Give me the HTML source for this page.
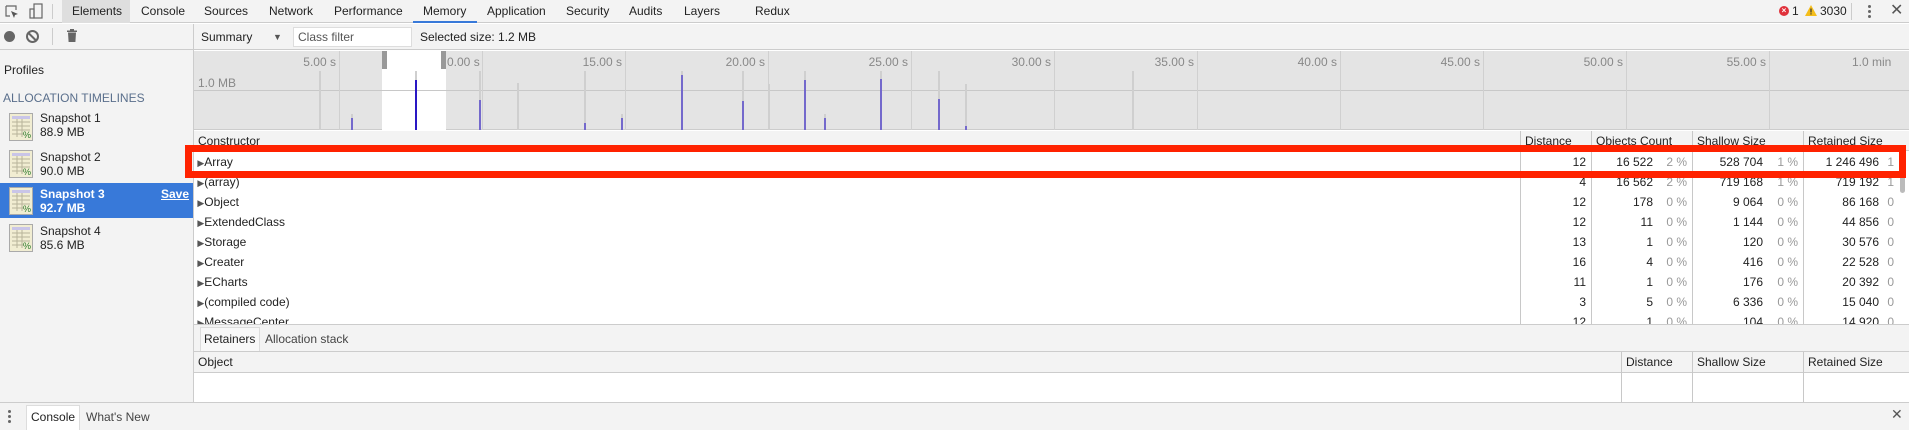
<!DOCTYPE html>
<html><head><meta charset="utf-8"><style>
*{box-sizing:border-box;margin:0;padding:0}
body{width:1909px;height:430px;overflow:hidden;background:#fff;font-family:"Liberation Sans",Arial,sans-serif;font-size:12px;color:#222;position:relative}
.a{position:absolute}
.t{position:absolute;white-space:nowrap;line-height:14px}
.gl{position:absolute;width:1px;background:#d0d0d0}
.bar{position:absolute;width:2px}
.g{background:#cfcfcf}
.b{background:#7469cc}
.r{text-align:right}
.pct{color:#999}
.vl{position:absolute;width:1px;background:#c8c8c8}
</style></head><body>
<div class="a" style="left:0;top:0;width:1909px;height:23px;background:#f3f3f3;border-bottom:1px solid #ccc"></div>
<svg class="a" style="left:4px;top:4px" width="16" height="16" viewBox="0 0 16 16"><path d="M2 2h10v4M2 2v10h4" fill="none" stroke="#666" stroke-width="1.2"/><path d="M7 7l7 3-3 1-1 3z" fill="#555"/></svg>
<svg class="a" style="left:29px;top:3px" width="14" height="17" viewBox="0 0 14 17"><rect x="5" y="1" width="8" height="14" fill="none" stroke="#666" stroke-width="1.2"/><rect x="1" y="6" width="4" height="9" fill="none" stroke="#666" stroke-width="1.2"/></svg>
<div class="a" style="left:52px;top:4px;width:1px;height:15px;background:#ccc"></div>
<div class="a" style="left:62px;top:0;width:68px;height:23px;background:#dedede"></div>
<div class="t" style="left:72px;top:4px">Elements</div>
<div class="t" style="left:141px;top:4px">Console</div>
<div class="t" style="left:204px;top:4px">Sources</div>
<div class="t" style="left:269px;top:4px">Network</div>
<div class="t" style="left:334px;top:4px">Performance</div>
<div class="t" style="left:423px;top:4px">Memory</div>
<div class="a" style="left:413px;top:21px;width:64px;height:2px;background:#3879d9"></div>
<div class="t" style="left:487px;top:4px">Application</div>
<div class="t" style="left:566px;top:4px">Security</div>
<div class="t" style="left:629px;top:4px">Audits</div>
<div class="t" style="left:684px;top:4px">Layers</div>
<div class="t" style="left:755px;top:4px">Redux</div>
<div class="a" style="left:1779px;top:6px;width:10px;height:10px;border-radius:50%;background:#e0313b;color:#fff;font-size:8px;line-height:10px;text-align:center;font-weight:bold">×</div>
<div class="t" style="left:1792px;top:4px">1</div>
<svg class="a" style="left:1805px;top:5px" width="12" height="11" viewBox="0 0 12 11"><path d="M6 0L12 11H0z" fill="#f4bd1a"/><rect x="5.4" y="3.5" width="1.2" height="4" fill="#333"/><rect x="5.4" y="8.3" width="1.2" height="1.2" fill="#333"/></svg>
<div class="t" style="left:1820px;top:4px">3030</div>
<div class="a" style="left:1851px;top:3px;width:1px;height:17px;background:#ccc"></div>
<div class="a" style="left:1868px;top:5px;width:3px;height:3px;border-radius:50%;background:#666;box-shadow:0 5px 0 #666,0 10px 0 #666"></div>
<div class="t" style="left:1890px;top:4px;font-size:16px;color:#555">✕</div>
<div class="a" style="left:0;top:24px;width:1909px;height:26px;background:#f3f3f3;border-bottom:1px solid #ccc"></div>
<div class="a" style="left:4px;top:31px;width:11px;height:11px;border-radius:50%;background:#666"></div>
<div class="a" style="left:26px;top:30px;width:13px;height:13px;border-radius:50%;border:2px solid #666"></div>
<div class="a" style="left:27px;top:35.5px;width:11px;height:2px;background:#666;transform:rotate(45deg)"></div>
<div class="a" style="left:52px;top:28px;width:1px;height:17px;background:#ccc"></div>
<svg class="a" style="left:67px;top:29px" width="10" height="13" viewBox="0 0 10 13"><rect x="0" y="1.5" width="10" height="1.5" fill="#666"/><rect x="3" y="0" width="4" height="2" fill="#666"/><path d="M1 3.5h8l-0.6 9.5h-6.8z" fill="#666"/></svg>
<div class="a" style="left:193px;top:24px;width:1px;height:379px;background:#ccc"></div>
<div class="t" style="left:201px;top:30px">Summary</div>
<div class="t" style="left:273px;top:30px;font-size:9px;color:#555">▼</div>
<div class="a" style="left:293px;top:27px;width:119px;height:20px;background:#fff;border:1px solid #ddd"></div>
<div class="t" style="left:298px;top:30px;color:#555">Class filter</div>
<div class="t" style="left:420px;top:30px">Selected size: 1.2 MB</div>
<div class="a" style="left:0;top:50px;width:193px;height:352px;background:#f3f3f3"></div>
<div class="t" style="left:4px;top:63px">Profiles</div>
<div class="t" style="left:3px;top:91px;color:#5a6f8c">ALLOCATION TIMELINES</div>
<div class="a" style="left:0;top:183px;width:193px;height:35px;background:#3879d9"></div>
<div class="t" style="left:40px;top:111px">Snapshot 1<br>88.9 MB</div>
<div class="t" style="left:40px;top:150px">Snapshot 2<br>90.0 MB</div>
<div class="t" style="left:40px;top:187px;color:#fff;font-weight:bold">Snapshot 3<br>92.7 MB</div>
<div class="t" style="left:161px;top:187px;color:#fff;font-weight:bold;text-decoration:underline">Save</div>
<div class="t" style="left:40px;top:224px">Snapshot 4<br>85.6 MB</div>
<svg class="a" style="left:9px;top:113px" width="24" height="140" viewBox="0 0 24 140">
<g id="si"><rect x="0.5" y="0.5" width="23" height="27" fill="#f1edd2" stroke="#aaa"/><rect x="3" y="3" width="18" height="3" fill="#c9c5e8"/><path d="M3 9h18M3 13h18M3 17h18M3 21h12M8 6v18M13 6v18" stroke="#b7b39a" stroke-width="1"/><text x="14" y="25" font-size="9" fill="#2a7a2a" font-family="Liberation Sans">%</text></g>
<use href="#si" y="37"/><use href="#si" y="74"/><use href="#si" y="111"/>
</svg>
<div class="a" style="left:194px;top:51px;width:1715px;height:79px;background:#e4e4e4;border-bottom:1px solid #ccc"></div>
<div class="a" style="left:382px;top:51px;width:64px;height:79px;background:#fff"></div>
<div class="a" style="left:194px;top:90px;width:1715px;height:1px;background:#c8c8c8"></div>
<div class="t" style="left:198px;top:76px;color:#888">1.0 MB</div>
<div class="gl" style="left:339px;top:51px;height:79px"></div>
<div class="gl" style="left:482px;top:51px;height:79px"></div>
<div class="gl" style="left:625px;top:51px;height:79px"></div>
<div class="gl" style="left:768px;top:51px;height:79px"></div>
<div class="gl" style="left:911px;top:51px;height:79px"></div>
<div class="gl" style="left:1054px;top:51px;height:79px"></div>
<div class="gl" style="left:1197px;top:51px;height:79px"></div>
<div class="gl" style="left:1340px;top:51px;height:79px"></div>
<div class="gl" style="left:1483px;top:51px;height:79px"></div>
<div class="gl" style="left:1626px;top:51px;height:79px"></div>
<div class="gl" style="left:1769px;top:51px;height:79px"></div>
<div class="t r" style="left:236px;width:100px;top:55px;color:#888">5.00 s</div>
<div class="t" style="left:447px;top:55px;color:#888">0.00 s</div>
<div class="t r" style="left:522px;width:100px;top:55px;color:#888">15.00 s</div>
<div class="t r" style="left:665px;width:100px;top:55px;color:#888">20.00 s</div>
<div class="t r" style="left:808px;width:100px;top:55px;color:#888">25.00 s</div>
<div class="t r" style="left:951px;width:100px;top:55px;color:#888">30.00 s</div>
<div class="t r" style="left:1094px;width:100px;top:55px;color:#888">35.00 s</div>
<div class="t r" style="left:1237px;width:100px;top:55px;color:#888">40.00 s</div>
<div class="t r" style="left:1380px;width:100px;top:55px;color:#888">45.00 s</div>
<div class="t r" style="left:1523px;width:100px;top:55px;color:#888">50.00 s</div>
<div class="t r" style="left:1666px;width:100px;top:55px;color:#888">55.00 s</div>
<div class="t" style="left:1852px;top:55px;color:#888">1.0 min</div>
<div class="a" style="left:382px;top:51px;width:5px;height:18px;background:#999"></div>
<div class="a" style="left:441px;top:51px;width:5px;height:18px;background:#999"></div>
<div class="bar g" style="left:319px;top:71px;height:59px"></div>
<div class="bar g" style="left:351px;top:114px;height:16px"></div><div class="bar b" style="left:351px;top:118px;height:12px"></div>
<div class="bar g" style="left:415px;top:71px;height:59px"></div><div class="bar" style="left:415px;top:80px;height:50px;background:#2a18c4"></div>
<div class="bar g" style="left:479px;top:71px;height:59px"></div><div class="bar b" style="left:479px;top:100px;height:30px"></div>
<div class="bar g" style="left:517px;top:83px;height:47px"></div>
<div class="bar g" style="left:584px;top:71px;height:59px"></div><div class="bar b" style="left:584px;top:123px;height:7px"></div>
<div class="bar g" style="left:621px;top:114px;height:16px"></div><div class="bar b" style="left:621px;top:118px;height:12px"></div>
<div class="bar g" style="left:681px;top:71px;height:59px"></div><div class="bar b" style="left:681px;top:75px;height:55px"></div>
<div class="bar g" style="left:742px;top:71px;height:59px"></div><div class="bar b" style="left:742px;top:101px;height:29px"></div>
<div class="bar g" style="left:768px;top:84px;height:46px"></div>
<div class="bar g" style="left:804px;top:71px;height:59px"></div><div class="bar b" style="left:804px;top:80px;height:50px"></div>
<div class="bar g" style="left:824px;top:114px;height:16px"></div><div class="bar b" style="left:824px;top:118px;height:12px"></div>
<div class="bar g" style="left:880px;top:71px;height:59px"></div><div class="bar b" style="left:880px;top:79px;height:51px"></div>
<div class="bar g" style="left:938px;top:71px;height:59px"></div><div class="bar b" style="left:938px;top:99px;height:31px"></div>
<div class="bar g" style="left:965px;top:84px;height:46px"></div><div class="bar b" style="left:965px;top:126px;height:4px"></div>
<div class="bar g" style="left:1132px;top:71px;height:59px"></div>
<div class="a" style="left:194px;top:131px;width:1715px;height:20px;background:#f3f3f3;border-bottom:1px solid #ccc"></div>
<div class="t" style="left:198px;top:134px">Constructor</div>
<div class="t" style="left:1525px;top:134px">Distance</div>
<div class="t" style="left:1596px;top:134px">Objects Count</div>
<div class="t" style="left:1697px;top:134px">Shallow Size</div>
<div class="t" style="left:1808px;top:134px">Retained Size</div>
<div class="vl" style="left:1520px;top:131px;height:193px"></div>
<div class="vl" style="left:1591px;top:131px;height:193px"></div>
<div class="vl" style="left:1692px;top:131px;height:193px"></div>
<div class="vl" style="left:1803px;top:131px;height:193px"></div>
<div class="a" style="left:1900px;top:173px;width:5px;height:20px;border-radius:3px;background:#bbb"></div>
<div class="a" style="left:194px;top:152px;width:1706px;height:172px;overflow:hidden">
<table style="border-collapse:collapse;font-size:12px;position:absolute;left:0;top:0">
<colgroup><col style="width:1326px"><col style="width:71px"><col style="width:62px"><col style="width:39px"><col style="width:71px"><col style="width:40px"><col style="width:76px"><col style="width:21px"></colgroup>
<tbody>
<tr style="height:20px"><td>&nbsp;<span style="font-size:9px;color:#555">▶</span>Array</td><td class="r" style="padding-right:5px">12</td><td class="r">16 522</td><td class="r pct" style="padding-right:5px">2 %</td><td class="r">528 704</td><td class="r pct" style="padding-right:5px">1 %</td><td class="r">1 246 496</td><td class="r pct" style="padding-right:6px">1</td></tr>
<tr style="height:20px"><td>&nbsp;<span style="font-size:9px;color:#555">▶</span>(array)</td><td class="r" style="padding-right:5px">4</td><td class="r">16 562</td><td class="r pct" style="padding-right:5px">2 %</td><td class="r">719 168</td><td class="r pct" style="padding-right:5px">1 %</td><td class="r">719 192</td><td class="r pct" style="padding-right:6px">1</td></tr>
<tr style="height:20px"><td>&nbsp;<span style="font-size:9px;color:#555">▶</span>Object</td><td class="r" style="padding-right:5px">12</td><td class="r">178</td><td class="r pct" style="padding-right:5px">0 %</td><td class="r">9 064</td><td class="r pct" style="padding-right:5px">0 %</td><td class="r">86 168</td><td class="r pct" style="padding-right:6px">0</td></tr>
<tr style="height:20px"><td>&nbsp;<span style="font-size:9px;color:#555">▶</span>ExtendedClass</td><td class="r" style="padding-right:5px">12</td><td class="r">11</td><td class="r pct" style="padding-right:5px">0 %</td><td class="r">1 144</td><td class="r pct" style="padding-right:5px">0 %</td><td class="r">44 856</td><td class="r pct" style="padding-right:6px">0</td></tr>
<tr style="height:20px"><td>&nbsp;<span style="font-size:9px;color:#555">▶</span>Storage</td><td class="r" style="padding-right:5px">13</td><td class="r">1</td><td class="r pct" style="padding-right:5px">0 %</td><td class="r">120</td><td class="r pct" style="padding-right:5px">0 %</td><td class="r">30 576</td><td class="r pct" style="padding-right:6px">0</td></tr>
<tr style="height:20px"><td>&nbsp;<span style="font-size:9px;color:#555">▶</span>Creater</td><td class="r" style="padding-right:5px">16</td><td class="r">4</td><td class="r pct" style="padding-right:5px">0 %</td><td class="r">416</td><td class="r pct" style="padding-right:5px">0 %</td><td class="r">22 528</td><td class="r pct" style="padding-right:6px">0</td></tr>
<tr style="height:20px"><td>&nbsp;<span style="font-size:9px;color:#555">▶</span>ECharts</td><td class="r" style="padding-right:5px">11</td><td class="r">1</td><td class="r pct" style="padding-right:5px">0 %</td><td class="r">176</td><td class="r pct" style="padding-right:5px">0 %</td><td class="r">20 392</td><td class="r pct" style="padding-right:6px">0</td></tr>
<tr style="height:20px"><td>&nbsp;<span style="font-size:9px;color:#555">▶</span>(compiled code)</td><td class="r" style="padding-right:5px">3</td><td class="r">5</td><td class="r pct" style="padding-right:5px">0 %</td><td class="r">6 336</td><td class="r pct" style="padding-right:5px">0 %</td><td class="r">15 040</td><td class="r pct" style="padding-right:6px">0</td></tr>
<tr style="height:20px"><td>&nbsp;<span style="font-size:9px;color:#555">▶</span>MessageCenter</td><td class="r" style="padding-right:5px">12</td><td class="r">1</td><td class="r pct" style="padding-right:5px">0 %</td><td class="r">104</td><td class="r pct" style="padding-right:5px">0 %</td><td class="r">14 920</td><td class="r pct" style="padding-right:6px">0</td></tr>
</tbody></table></div>
<div class="a" style="left:185px;top:145px;width:1721px;height:33px;border:7px solid #ff2200"></div>
<div class="a" style="left:194px;top:324px;width:1715px;height:28px;background:#f3f3f3;border-top:1px solid #ccc;border-bottom:1px solid #ccc"></div>
<div class="a" style="left:200px;top:327px;width:60px;height:24px;background:#f8f8f8;border:1px solid #ddd;border-bottom:none"></div>
<div class="t" style="left:204px;top:332px">Retainers</div>
<div class="t" style="left:265px;top:332px;color:#444">Allocation stack</div>
<div class="a" style="left:194px;top:352px;width:1715px;height:21px;background:#f3f3f3;border-bottom:1px solid #ccc"></div>
<div class="t" style="left:198px;top:355px">Object</div>
<div class="t" style="left:1626px;top:355px">Distance</div>
<div class="t" style="left:1697px;top:355px">Shallow Size</div>
<div class="t" style="left:1808px;top:355px">Retained Size</div>
<div class="vl" style="left:1621px;top:352px;height:50px"></div>
<div class="vl" style="left:1692px;top:352px;height:50px"></div>
<div class="vl" style="left:1803px;top:352px;height:50px"></div>
<div class="a" style="left:0;top:402px;width:1909px;height:28px;background:#f3f3f3;border-top:1px solid #ccc"></div>
<div class="a" style="left:8px;top:410px;width:3px;height:3px;border-radius:50%;background:#666;box-shadow:0 5px 0 #666,0 10px 0 #666"></div>
<div class="a" style="left:26px;top:405px;width:54px;height:25px;background:#fff;border:1px solid #ddd;border-bottom:none"></div>
<div class="t" style="left:31px;top:410px">Console</div>
<div class="t" style="left:86px;top:410px;color:#444">What's New</div>
<div class="t" style="left:1891px;top:407px;font-size:14px;color:#555">✕</div>
</body></html>
